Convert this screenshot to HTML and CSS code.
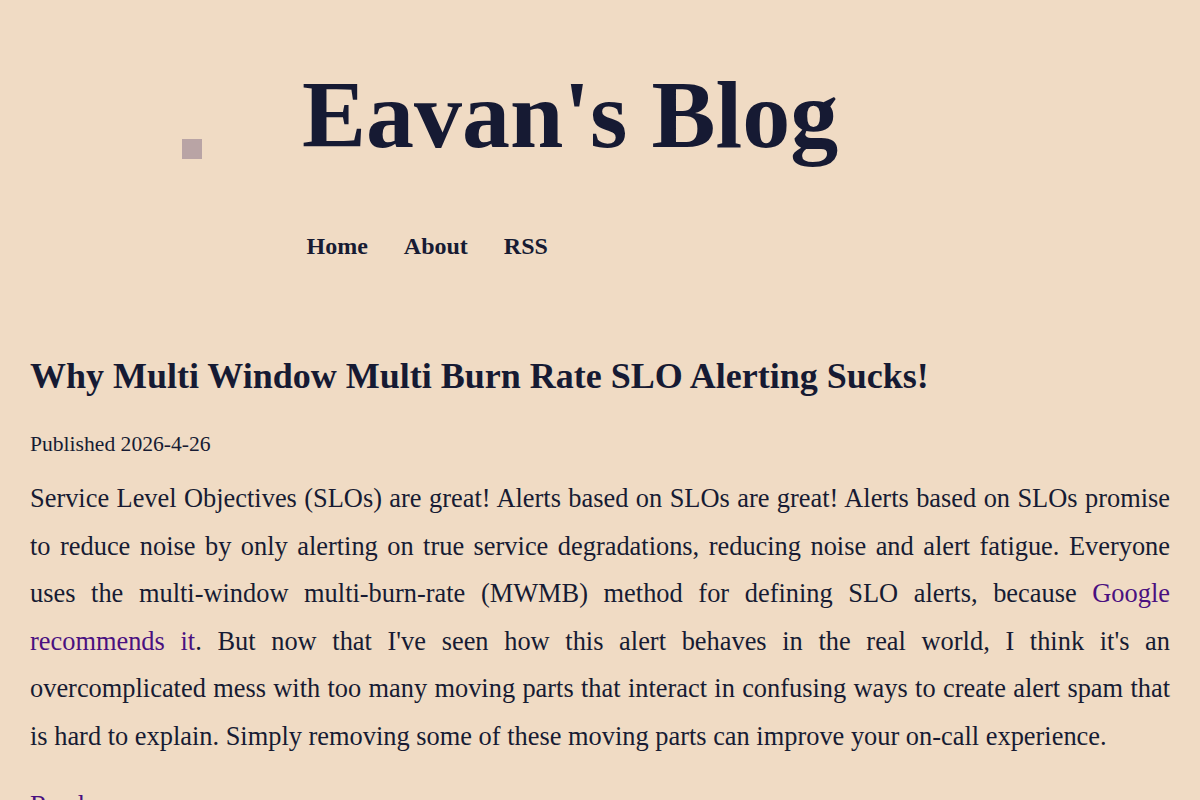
FILE: index.html
```html
<!DOCTYPE html>
<html lang="en">
<head>
<meta charset="utf-8">
<title>Eavan's Blog</title>
<link rel="stylesheet" href="styles.css">
</head>
<body>
<header class="site-header">
  <div class="logo" aria-hidden="true"></div>
  <div class="brand">
    <h1 class="site-title">Eavan's Blog</h1>
    <nav class="site-nav">
      <a href="#">Home</a>
      <a href="#">About</a>
      <a href="#">RSS</a>
    </nav>
  </div>
</header>
<main class="content">
  <article class="post">
    <h2 class="post-title">Why Multi Window Multi Burn Rate SLO Alerting Sucks!</h2>
    <p class="post-date">Published 2026-4-26</p>
    <p class="post-summary">Service Level Objectives (SLOs) are great! Alerts based on SLOs are great! Alerts based on SLOs promise to reduce noise by only alerting on true service degradations, reducing noise and alert fatigue. Everyone uses the multi-window multi-burn-rate (MWMB) method for defining SLO alerts, because <a href="#">Google recommends it</a>. But now that I've seen how this alert behaves in the real world, I think it's an overcomplicated mess with too many moving parts that interact in confusing ways to create alert spam that is hard to explain. Simply removing some of these moving parts can improve your on-call experience.</p>
    <p class="read-more"><a href="#">Read more</a></p>
  </article>
</main>
</body>
</html>
```

FILE: styles.css
```css
html, body {
  margin: 0;
  padding: 0;
  background: #f0dbc4;
}

body {
  font-family: "Liberation Serif", "Times New Roman", serif;
  color: #171b33;
  overflow: hidden;
}

a {
  color: #4a1080;
  text-decoration: none;
}

.site-header {
  display: flex;
  align-items: flex-start;
  gap: 100px;
  padding: 61.5px 0 0 182px;
}

.logo {
  width: 20px;
  height: 20px;
  margin-top: 77.5px;
  background: #b9a4a5;
  flex: none;
}

.brand {
  display: flex;
  flex-direction: column;
}

.site-title {
  margin: 0;
  font-size: 96px;
  font-weight: bold;
  line-height: 1.1;
  color: #161a33;
}

.site-nav {
  display: flex;
  gap: 36px;
  margin-top: 64.9px;
  padding-left: 4.5px;
}

.site-nav a {
  font-size: 24px;
  font-weight: bold;
  line-height: 1.2;
  color: #171b33;
}

.content {
  padding: 94.5px 30px 0 30px;
}

.post-title {
  margin: 0;
  font-size: 36px;
  font-weight: bold;
  line-height: 1.2;
  color: #161a33;
}

.post-date {
  margin: 33.3px 0 0 0;
  font-size: 21.6px;
  line-height: 1.2;
}

.post-summary {
  margin: 17.7px 0 0 0;
  font-size: 26.4px;
  line-height: 1.8;
  text-align: justify;
}

.read-more {
  margin: 21.9px 0 0 0;
  font-size: 26.4px;
  line-height: 1.8;
}
```
